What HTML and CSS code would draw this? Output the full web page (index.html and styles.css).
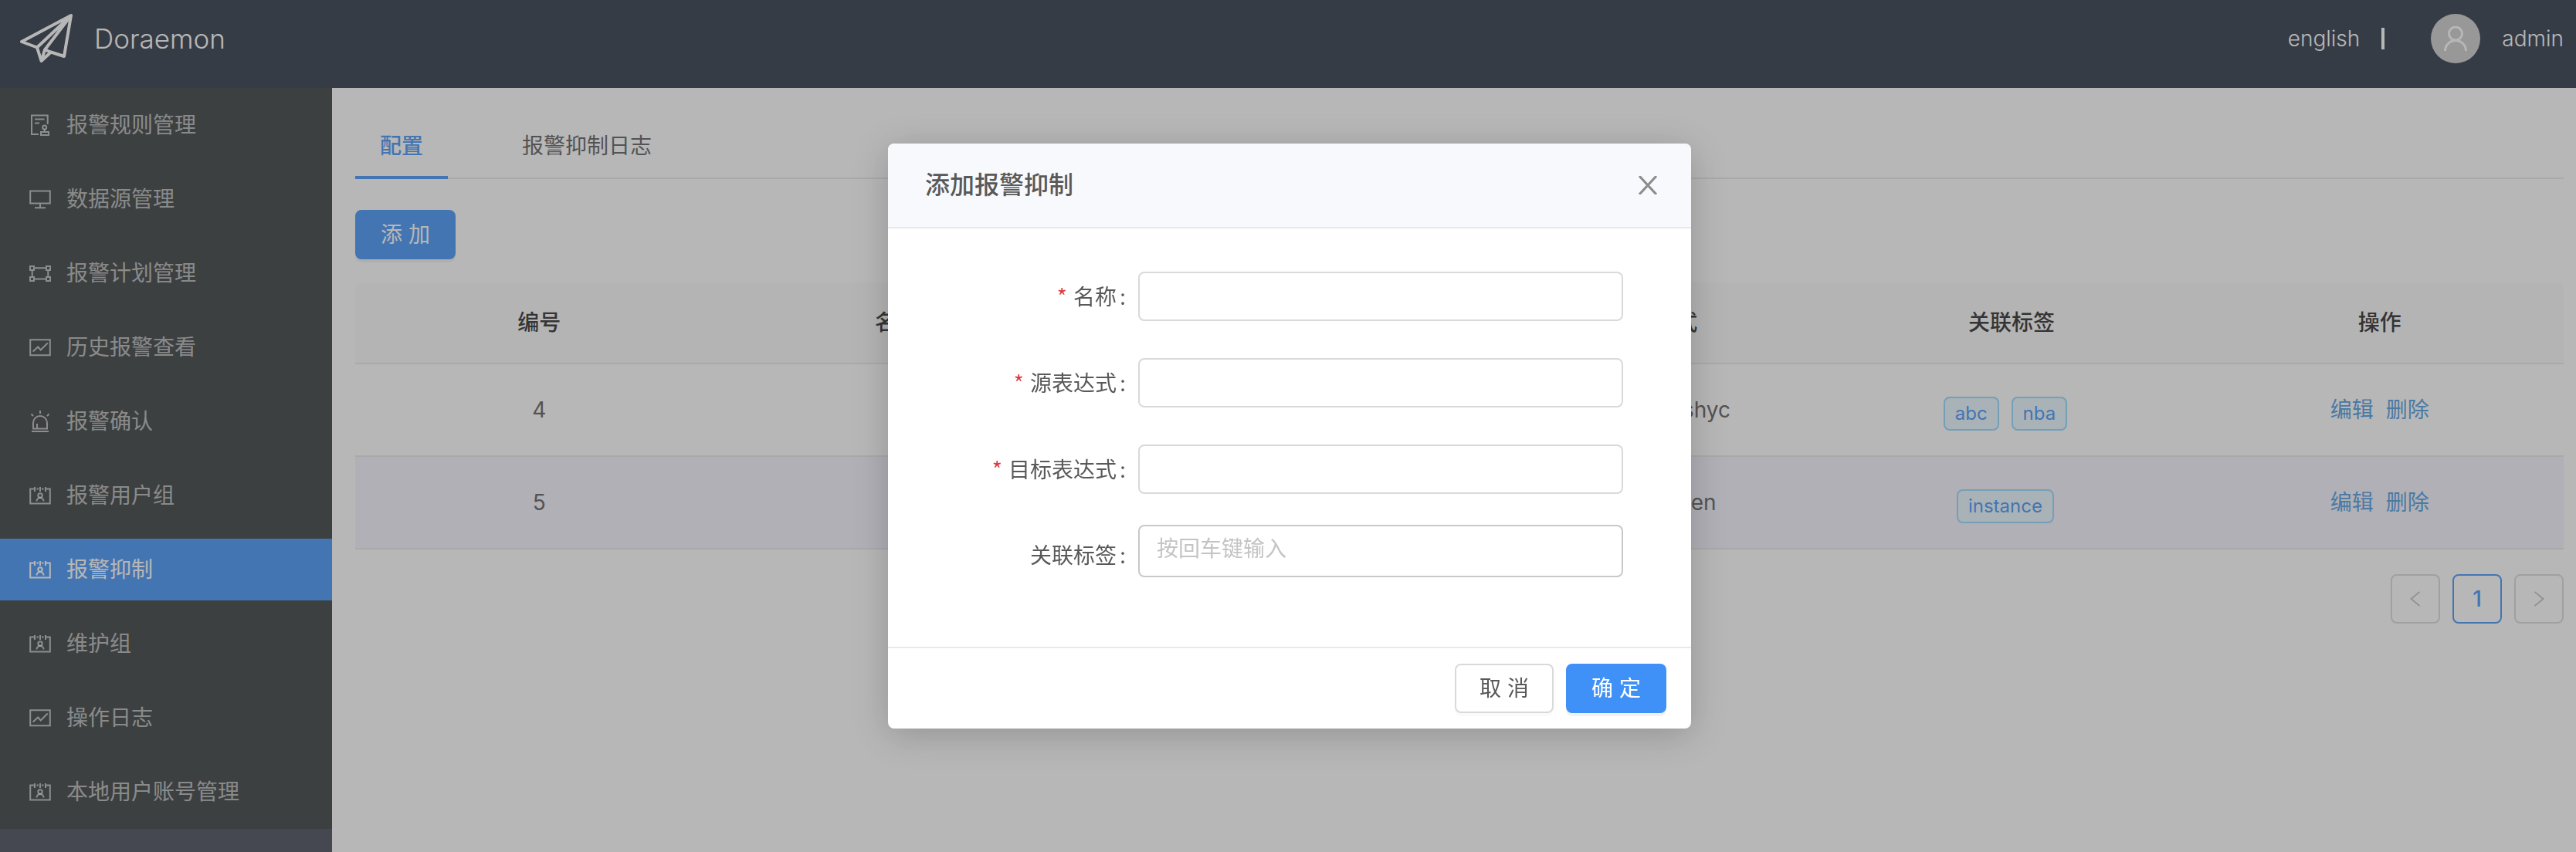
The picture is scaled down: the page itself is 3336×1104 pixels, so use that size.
FILE: index.html
```html
<!DOCTYPE html>
<html lang="zh-CN">
<head>
<meta charset="utf-8">
<title>Doraemon</title>
<link rel="stylesheet" href="styles.css">
</head>
<body>
<svg class="sprite" aria-hidden="true">
  <symbol id="i-audit" viewBox="0 0 28 28"><path d="M12 26H3V1.500h20.700V13M7 6.500h12.500M7 11.500h6M19.700 19.500V23M15 23h10v4H15z"/><circle cx="19.700" cy="17" r="2.500"/></symbol>
  <symbol id="i-desktop" viewBox="0 0 28 28"><path d="M1.200 3.500h25.600v16H1.200zM14 19.500V25M7 25.200h14"/></symbol>
  <symbol id="i-gateway" viewBox="0 0 28 28"><path d="M1 5h5v5H1zM22 5h5v5h-5zM1 19h5v5H1zM22 19h5v5h-5zM6 7.200h16M6 21.500h16M3.700 10v9M24.300 10v9"/></symbol>
  <symbol id="i-chart" viewBox="0 0 28 28"><path d="M1.200 4.200h25.600v20H1.200zM4.700 19.500l6.500-6 3.500 4 9-9"/></symbol>
  <symbol id="i-alert" viewBox="0 0 28 28"><path d="M5 23.500V16a9 9 0 0 1 18 0v7.500zM3 27h22M10 17v6M14 0v4M2.500 4.500L5 7M25.500 4.500L23 7"/></symbol>
  <symbol id="i-group" viewBox="0 0 28 28"><path d="M7 5.500H1.200v19h25.600v-19H21M9.500 5.500H12M16 5.500h2.500M7 3v6M14 3v6M21 3v6M9.500 21.500c0-6 9-6 9 0"/><circle cx="14" cy="14" r="2.700"/></symbol>
</svg>

<header class="header">
  <div class="brand">
    <svg class="logo" viewBox="0 0 68 64" aria-hidden="true"><path d="M66 2L2 36 22 43.500 27.500 61 40 49.500 57 55zM66 2L22 43.500M66 2L32 46.500 27.500 61M32 46.500l8 3"/></svg>
    <span class="brand-name">Doraemon</span>
  </div>
  <div class="account">
    <a class="lang" href="#">english</a>
    <span class="divider"></span>
    <span class="avatar"><svg viewBox="0 0 32 32" aria-hidden="true"><circle cx="16" cy="9.500" r="8.500"/><path d="M2.500 32a13.500 13.500 0 0 1 27 0"/></svg></span>
    <span>admin</span>
  </div>
</header>

<div class="layout">
  <nav class="sider">
    <div class="menu">
      <a class="menu-item" href="#"><svg class="icon"><use href="#i-audit"/></svg>报警规则管理</a>
      <a class="menu-item" href="#"><svg class="icon"><use href="#i-desktop"/></svg>数据源管理</a>
      <a class="menu-item" href="#"><svg class="icon"><use href="#i-gateway"/></svg>报警计划管理</a>
      <a class="menu-item" href="#"><svg class="icon"><use href="#i-chart"/></svg>历史报警查看</a>
      <a class="menu-item" href="#"><svg class="icon"><use href="#i-alert"/></svg>报警确认</a>
      <a class="menu-item" href="#"><svg class="icon"><use href="#i-group"/></svg>报警用户组</a>
      <a class="menu-item active" href="#"><svg class="icon"><use href="#i-group"/></svg>报警抑制</a>
      <a class="menu-item" href="#"><svg class="icon"><use href="#i-group"/></svg>维护组</a>
      <a class="menu-item" href="#"><svg class="icon"><use href="#i-chart"/></svg>操作日志</a>
      <a class="menu-item" href="#"><svg class="icon"><use href="#i-group"/></svg>本地用户账号管理</a>
    </div>
  </nav>

  <main class="content">
    <div class="tabs">
      <a class="tab active" href="#">配置</a>
      <a class="tab" href="#">报警抑制日志</a>
    </div>
    <button class="btn primary" type="button">添 加</button>
    <table class="table">
      <thead>
        <tr><th>编号</th><th>名称：</th><th>源表达式</th><th>目标表达式</th><th>关联标签</th><th>操作</th></tr>
      </thead>
      <tbody>
        <tr>
          <td>4</td><td>a</td><td>instance=abc</td><td>instance=abshyc</td>
          <td><span class="tag">abc</span><span class="tag">nba</span></td>
          <td><a class="action" href="#">编辑</a><a class="action" href="#">删除</a></td>
        </tr>
        <tr>
          <td>5</td><td>b</td><td>service=api</td><td>service=token</td>
          <td><span class="tag">instance</span></td>
          <td><a class="action" href="#">编辑</a><a class="action" href="#">删除</a></td>
        </tr>
      </tbody>
    </table>
    <div class="pagination">
      <button class="page" type="button" aria-label="上一页" disabled><svg viewBox="0 0 24 24"><path d="M18 2L6 12l12 10"/></svg></button>
      <button class="page current" type="button">1</button>
      <button class="page" type="button" aria-label="下一页" disabled><svg viewBox="0 0 24 24"><path d="M6 2l12 10L6 22"/></svg></button>
    </div>
  </main>
</div>

<div class="mask">
  <section class="modal" role="dialog" aria-labelledby="modal-title">
    <div class="modal-header">
      <h2 class="modal-title" id="modal-title">添加报警抑制</h2>
      <button class="close" type="button" aria-label="关闭"><svg viewBox="0 0 24 24"><path d="M1 0l22 24M23 0L1 24"/></svg></button>
    </div>
    <form class="modal-body" id="inhibit-form">
      <div class="field"><label class="required" for="name">名称</label><input id="name" type="text"></div>
      <div class="field"><label class="required" for="source">源表达式</label><input id="source" type="text"></div>
      <div class="field"><label class="required" for="target">目标表达式</label><input id="target" type="text"></div>
      <div class="field tags-field"><label for="labels">关联标签</label><input id="labels" type="text" placeholder="按回车键输入"></div>
    </form>
    <div class="modal-footer">
      <button class="btn" type="button">取 消</button>
      <button class="btn primary" type="submit" form="inhibit-form">确 定</button>
    </div>
  </section>
</div>
</body>
</html>
```
FILE: styles.css
```css
* { box-sizing: border-box; }

body {
  margin: 0;
  min-height: 100vh;
  display: flex;
  flex-direction: column;
  font: 28px/42px Inter, "Noto Sans CJK SC", sans-serif;
  color: #595959;
  background: #fff;
}

a { color: inherit; text-decoration: none; }
button, input { font: inherit; color: inherit; }
svg { fill: none; stroke: currentColor; stroke-width: 2; }
.sprite { display: none; }

/* Top bar */
.header {
  display: flex;
  justify-content: space-between;
  height: 114px;
  padding: 0 16px 14px 26px;
  color: #fff;
  background: #283242;
}
.brand, .account { display: flex; align-items: center; }
.brand { gap: 28px; }
.logo { width: 68px; height: 64px; stroke-width: 4; stroke-linejoin: round; }
.brand-name { font-size: 35px; font-weight: 300; }
.account { gap: 28px; font-weight: 300; }
.divider { width: 4px; height: 28px; background: #fff; }
.avatar {
  display: grid;
  place-items: center;
  width: 64px;
  height: 64px;
  margin-left: 32px;
  border-radius: 50%;
  background: #ccc;
}
.avatar svg { width: 32px; height: 32px; stroke-width: 3; }

/* Side menu */
.layout { flex: 1; display: flex; }
.sider { flex: 0 0 430px; background: #444655; }
.menu {
  display: flex;
  flex-direction: column;
  gap: 16px;
  padding: 8px 0;
  background: #35393b;
}
.menu-item {
  display: flex;
  align-items: center;
  gap: 20px;
  height: 80px;
  padding-left: 38px;
  color: rgba(255, 255, 255, .65);
}
.menu-item.active { color: #fff; background: #3f91f7; }
.icon { width: 28px; height: 28px; }

/* Page content */
.content { flex: 1; padding: 30px 16px 30px 30px; }
.tabs {
  display: flex;
  gap: 64px;
  margin-bottom: 40px;
  border-bottom: 2px solid #e8e8e8;
}
.tab { padding: 24px 32px 18px; }
.tab.active {
  margin-bottom: -2px;
  border-bottom: 4px solid #3f91f7;
  color: #3f91f7;
  font-weight: 500;
}

.btn {
  height: 64px;
  padding: 0 30px;
  border: 2px solid #d9d9d9;
  border-radius: 8px;
  background: #fff;
  box-shadow: 0 4px 0 rgba(0, 0, 0, .02);
}
.btn.primary {
  min-width: 130px;
  border-color: #3f91f7;
  color: #fff;
  background: #3f91f7;
  box-shadow: 0 4px 0 rgba(0, 0, 0, .05);
}

.table {
  width: 100%;
  margin-top: 30px;
  border-spacing: 0;
  table-layout: fixed;
  text-align: center;
}
.table th {
  height: 106px;
  padding: 0;
  border-bottom: 2px solid #e8e8e8;
  color: #262626;
  font-weight: 500;
  background: #fafafa;
}
.table th:first-child { border-top-left-radius: 8px; }
.table th:last-child { border-top-right-radius: 8px; }
.table td { height: 120px; padding: 0; border-bottom: 2px solid #e8e8e8; }
.table tbody tr:nth-child(even) { background: #f4f3fd; }
.tag {
  display: inline-block;
  margin: 10px 16px 0 0;
  padding: 0 13px;
  border: 2px solid #91d5ff;
  border-radius: 8px;
  font-size: 24px;
  line-height: 40px;
  color: #3f91f7;
  background: #e6f7ff;
}
.action { color: #4a98e0; }
.action + .action { margin-left: 16px; }

.pagination { display: flex; justify-content: flex-end; gap: 16px; margin-top: 32px; }
.page {
  display: grid;
  place-items: center;
  width: 64px;
  height: 64px;
  padding: 0;
  border: 2px solid #d9d9d9;
  border-radius: 8px;
  color: #bfbfbf;
  background: #fff;
}
.page svg { width: 22px; height: 22px; }
.page.current { border-color: #3f91f7; color: #3f91f7; font-weight: 500; }

/* Dialog */
.mask {
  position: fixed;
  inset: 0;
  display: flex;
  justify-content: center;
  align-items: flex-start;
  padding: 186px 0 0 4px;
  background: rgba(75, 75, 75, .4);
}
.modal {
  width: 1040px;
  max-width: 100%;
  overflow: hidden;
  border-radius: 8px;
  background: #fff;
  box-shadow: 0 8px 48px rgba(0, 0, 0, .2);
}
.modal-header {
  display: flex;
  justify-content: space-between;
  align-items: center;
  height: 110px;
  padding-left: 48px;
  border-bottom: 2px solid #e8e8e8;
  background: #f8f9fd;
}
.modal-title { margin: 0; font-size: 32px; font-weight: 500; }
.close {
  display: grid;
  place-items: center;
  width: 112px;
  height: 108px;
  padding: 0;
  border: 0;
  color: #8c8c8c;
  background: none;
}
.close svg { width: 24px; height: 24px; stroke-width: 3; }
.modal-body {
  display: flex;
  flex-direction: column;
  gap: 32px;
  padding: 48px 88px 78px 48px;
}
.field {
  display: grid;
  grid-template-columns: 276px 1fr;
  align-items: center;
  height: 80px;
}
.field label { padding-right: 16px; text-align: right; }
.field label::after { content: ":"; margin-left: 4px; }
.field label.required::before {
  content: "*";
  margin-right: 8px;
  font-family: "Noto Sans CJK SC", sans-serif;
  color: #e0383e;
}
.field input {
  width: 100%;
  height: 64px;
  padding: 0 22px;
  border: 2px solid #d9d9d9;
  border-radius: 8px;
  background: #fff;
}
.tags-field input { align-self: start; height: 68px; padding-bottom: 6px; border-color: #c8c8c8; }
.field input::placeholder { color: #c4c4c4; }
.modal-footer {
  display: flex;
  justify-content: flex-end;
  gap: 16px;
  padding: 20px 32px;
  border-top: 2px solid #e8e8e8;
}
```
